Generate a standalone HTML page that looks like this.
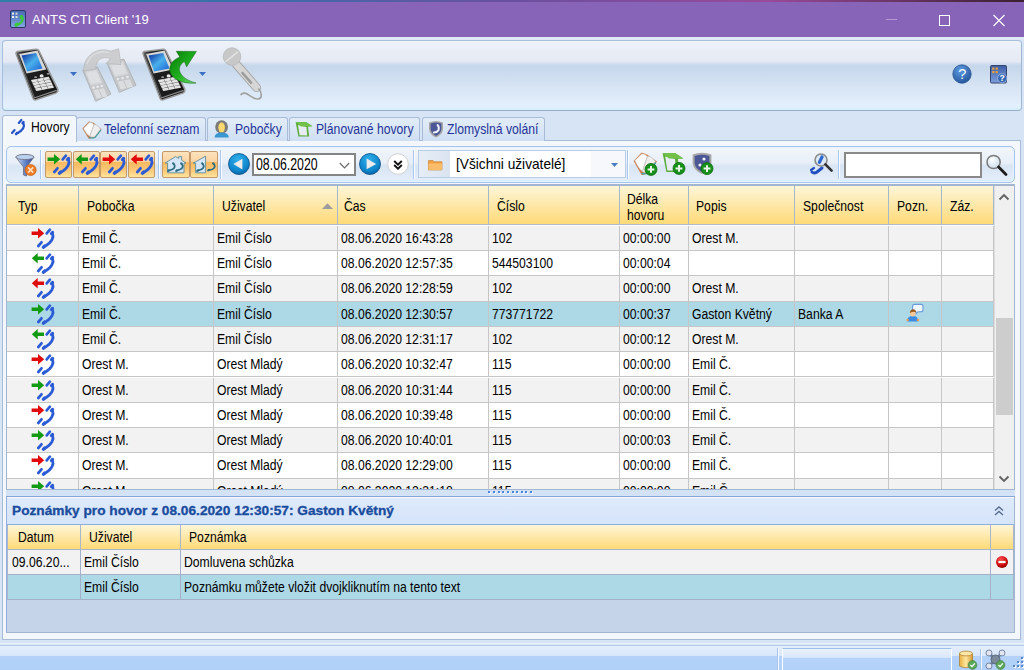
<!DOCTYPE html><html><head><meta charset="utf-8"><style>*{margin:0;padding:0;box-sizing:border-box}
html,body{width:1024px;height:670px;overflow:hidden;background:#d6e4f6;font-family:"Liberation Sans",sans-serif;position:relative}
.a{position:absolute}
svg{overflow:visible}
.t{display:inline-block;font-size:14px;transform:scaleX(.87);transform-origin:0 50%;white-space:nowrap}
#topstrip{left:0;top:0;width:1024px;height:2px;background:linear-gradient(90deg,#2f7fa8 0%,#3d6ea8 25%,#6a4fa0 50%,#9a4a9a 75%,#3a2030 100%)}
#title{left:0;top:2px;width:1024px;height:35px;background:#8764b8}
#ttext{left:32px;top:12px;color:#fff;font-size:13px;line-height:16px;white-space:nowrap}
#tbline{left:0;top:37px;width:1024px;height:3px;background:#dfe9f6}
#toolbar{left:2px;top:40px;width:1020px;height:71px;border:1px solid #a7bfdc;border-bottom-color:#98aec6;border-right-color:#a0b6d0;border-radius:4px;
 background:linear-gradient(180deg,#eef2f9 0%,#e4e9f3 30%,#cddcee 33.5%,#c6d7eb 37%,#d6e4f4 65%,#e3effc 94%,#d6eefa 100%)}
#tabpanel{left:2px;top:140px;width:1019px;height:500px;border:1px solid #a9bcd6;background:#f3f7fc}
.tab{top:117px;height:24px;border:1px solid #a9bcd6;border-bottom:none;border-radius:3px 3px 0 0;
 background:linear-gradient(180deg,#e3edf9,#cfdff3);color:#1f3496;font-size:12px;line-height:22px;white-space:nowrap}
.tab.act{top:115px;height:27px;background:#f3f7fc;color:#000;z-index:2}
#filterbar{left:6px;top:146px;width:1009px;height:37px;border:1px solid #a6c4ec;border-radius:5px;box-shadow:inset 0 0 0 1px #e6f2fc,inset 0 -2px 0 #d2eefa;
 background:linear-gradient(180deg,#f2f6fb 0%,#e8eff8 45%,#d8e5f4 55%,#e6eefa 100%)}
#grid{left:6px;top:184px;width:1009px;height:306px;border:1px solid #a2b6cf;border-top-width:2px;background:#fff;overflow:hidden}
.hdr{top:0;height:39px;border-bottom:1px solid #b0bccc;background:linear-gradient(180deg,#fff6d8 0%,#fee8a8 50%,#feda78 100%)}
.hc{top:0;height:39px;border-right:1px solid #a7b8cd;color:#000;white-space:nowrap;line-height:39px}
.row{left:0;width:987px;height:25.3px}
.c{position:absolute;top:0;height:100%;border-right:1px solid #c6c6c6;border-bottom:1px solid #c6c6c6;color:#000;white-space:nowrap;line-height:24px;padding-left:3px;overflow:hidden}
#vscroll{left:987px;top:0;width:21px;height:303px;background:#f0f0f0;border-left:1px solid #dcdcdc}
#splitter{left:6px;top:490px;width:1009px;height:6px;background:#d3e2f4}
#notes{left:6px;top:496px;width:1009px;height:137px;border:1px solid #a2b6cf;border-top-color:#86a6d8;border-left-color:#94b0da;background:#c5d4e8}
#nhead{left:0;top:0;width:1007px;height:28px;border-bottom:1px solid #8fb0dc;box-shadow:inset 0 1px 0 #f6faff;background:linear-gradient(180deg,#dfeafc,#d5e4fa);-webkit-text-stroke:.35px #1c4fa0;
 color:#1a4c9c;font-weight:bold;font-size:13.7px;line-height:28px;padding-left:5px;white-space:nowrap}
#status{left:0;top:645px;width:1024px;height:25px;border-top:1px solid #b8cde8;background:linear-gradient(180deg,#e4eefc 0%,#d8e7fb 40%,#b4d2f9 43%,#b0d0f8 100%)}
#stline{left:0;top:643px;width:1024px;height:1px;background:#eef4fc}
.sep{width:2px;background:linear-gradient(90deg,#a9c8ef 50%,#fafcff 50%)}
.obtn{border:1px solid #c49a68;border-radius:2px;background:linear-gradient(180deg,#fde3bc 0%,#fbd3a2 38%,#f9b95e 40%,#fac576 70%,#fde49c 100%)}
.nhc{height:24px;border-right:1px solid #a8b6cc;color:#000;white-space:nowrap;line-height:23px}
.nc{height:25px;border-right:1px solid #a3b2ca;border-bottom:1px solid #a3b2ca;color:#000;white-space:nowrap;line-height:24px;padding-left:3px;overflow:hidden}
.sep2{width:2px;background:linear-gradient(90deg,#a8c4e8 50%,#f4f8fe 50%)}
</style></head><body>
<div id="topstrip" class="a"></div>
<div id="title" class="a"></div>
<div id="ttext" class="a">ANTS CTI Client '19</div>
<div id="tbline" class="a"></div>
<div id="toolbar" class="a"></div>
<div id="tabpanel" class="a"></div>
<div class="a tab act" style="left:2px;width:75px;padding-left:28px"><span class="t">Hovory</span></div>
<div class="a tab" style="left:76px;width:130px;padding-left:26.5px"><span class="t">Telefonní seznam</span></div>
<div class="a tab" style="left:207px;width:81px;padding-left:26.5px"><span class="t">Pobočky</span></div>
<div class="a tab" style="left:289px;width:131px;padding-left:25.5px"><span class="t">Plánované hovory</span></div>
<div class="a tab" style="left:422px;width:123px;padding-left:24px"><span class="t">Zlomyslná volání</span></div>
<div id="filterbar" class="a"></div>

<svg class="a" style="left:10px;top:10px" width="16" height="18" viewBox="0 0 16 18">
<defs><linearGradient id="ai" x1="0" y1="0" x2="0" y2="1"><stop offset="0" stop-color="#4568b0"/><stop offset="1" stop-color="#86a6e6"/></linearGradient></defs>
<rect x=".5" y=".5" width="15" height="17" rx="1.5" fill="url(#ai)" stroke="#2b3866"/>
<rect x="2" y="2.6" width="2" height="2" fill="#eee"/><rect x="5.5" y="2.6" width="2" height="2" fill="#ddd"/>
<rect x="2" y="6" width="2" height="2" fill="#eee"/><rect x="5.5" y="6" width="2" height="2" fill="#ddd"/>
<path d="M11.4 6.6 C13.6 9.4 12 13.6 7 15" stroke="#3cc83c" stroke-width="2.4" fill="none" stroke-linecap="round"/><ellipse cx="11.6" cy="7.4" rx="1.9" ry="2.3" fill="#3cc83c" transform="rotate(-30 11.6 7.4)"/><ellipse cx="6.6" cy="14.6" rx="2.4" ry="1.8" fill="#3cc83c" transform="rotate(-30 6.6 14.6)"/>
</svg>
<div class="a" style="left:886px;top:19px;width:11px;height:1px;background:#b29ad6"></div>
<div class="a" style="left:939px;top:15px;width:11px;height:11px;border:1px solid #fff"></div>
<svg class="a" style="left:993px;top:15px" width="12" height="11" viewBox="0 0 12 11"><path d="M0.5 0 L11.5 11 M11.5 0 L0.5 11" stroke="#fff" stroke-width="1.1"/></svg>
<svg class="a" style="left:15px;top:48px" width="44" height="53" viewBox="0 0 44 53">
<defs><linearGradient id="sg15_48" x1="0" y1="0" x2="1" y2="1"><stop offset="0" stop-color="#0a2a9a"/><stop offset=".5" stop-color="#4ab0ec"/><stop offset="1" stop-color="#1a5ed0"/></linearGradient>
<linearGradient id="bg15_48" x1="0" y1="0" x2="1" y2="0"><stop offset="0" stop-color="#707070"/><stop offset=".15" stop-color="#202020"/><stop offset="1" stop-color="#161616"/></linearGradient></defs>
<path d="M1.2 6.2 Q0.2 4.2 2.6 3.6 L21 1.2 Q23 1 23.8 2.6 L42.6 40.8 Q43.6 44 41 45 L21 51.8 Q19 52.4 18.2 50.6 Z" fill="url(#bg15_48)" stroke="#9a9a9a" stroke-width="1.5"/><path d="M2.4 6.4 L19.6 50" stroke="#5a5a5a" stroke-width="1.2"/>
<path d="M19 50 L41.6 42.4" stroke="#8a8a8a" stroke-width="1.2"/>
<path d="M4.1 5.9 L22.5 2.6 L31.3 21.4 L11.6 25.6 Z" fill="#d8d8d8"/>
<path d="M6.6 7.6 L21.2 5.1 L27.5 20.6 L12 23.5 Z" fill="url(#sg15_48)"/>
<ellipse cx="26.6" cy="27.9" rx="2" ry="1.7" fill="#e8e8e8"/>
<ellipse cx="20.6" cy="29.2" rx="1.5" ry=".9" fill="#9a9a9a"/><ellipse cx="33.2" cy="25.8" rx="1.5" ry=".9" fill="#9a9a9a"/>
<path d="M15.8 31.9 L33.8 28.5 L39.2 39 L21.2 43.2 Z" fill="#4a4a4a"/>
<polygon points="16.0,32.0 21.7,30.9 22.9,33.5 17.3,34.5" fill="#e4e4e4"/><polygon points="22.0,30.9 27.7,29.8 28.9,32.4 23.3,33.4" fill="#e4e4e4"/><polygon points="28.0,29.7 33.7,28.7 34.9,31.2 29.3,32.3" fill="#e4e4e4"/><polygon points="17.4,34.8 23.0,33.8 24.3,36.3 18.6,37.4" fill="#e4e4e4"/><polygon points="23.4,33.7 29.0,32.6 30.3,35.2 24.6,36.2" fill="#e4e4e4"/><polygon points="29.4,32.6 35.0,31.5 36.3,34.0 30.6,35.1" fill="#e4e4e4"/><polygon points="18.7,37.7 24.4,36.6 25.6,39.1 20.0,40.2" fill="#e4e4e4"/><polygon points="24.7,36.5 30.4,35.5 31.6,38.0 26.0,39.1" fill="#e4e4e4"/><polygon points="30.7,35.4 36.4,34.3 37.6,36.9 32.0,37.9" fill="#e4e4e4"/><polygon points="20.1,40.5 25.7,39.4 27.0,42.0 21.3,43.0" fill="#e4e4e4"/><polygon points="26.1,39.3 31.7,38.3 33.0,40.8 27.3,41.9" fill="#e4e4e4"/><polygon points="32.1,38.2 37.7,37.2 39.0,39.7 33.3,40.8" fill="#e4e4e4"/>
</svg>
<svg class="a" style="left:70px;top:72px" width="7" height="4" viewBox="0 0 7 4"><path d="M0 0 H7 L3.5 4Z" fill="#3a6fc4"/></svg>
<svg class="a" style="left:80px;top:44px;opacity:.85" width="60" height="60" viewBox="0 0 60 60">
<polygon points="2.7,26.0 17.5,23.3 30.9,50.1 15.7,57.3" fill="#c2c2c2" stroke="#acacac" stroke-width="1"/><polygon points="5.0,27.6 16.8,25.4 22.5,39.2 10.7,41.4" fill="#d6d6d6" /><polygon points="6.4,28.7 16.4,26.9 20.9,37.5 10.8,39.3" fill="#e0e0e0" /><circle cx="13.5" cy="43.6" r="1.3" fill="#ececec"/><circle cx="17.6" cy="42.8" r="1.3" fill="#ececec"/><circle cx="21.8" cy="42.0" r="1.3" fill="#ececec"/><polygon points="13.4,46.3 24.0,44.3 27.4,52.5 16.7,54.4" fill="#dcdcdc" /><path d="M18.7 45.3 L22.1 53.4" stroke="#b8b8b8" stroke-width=".8"/>
<polygon points="26.9,18.8 43.9,15.2 56.0,41.2 39.4,48.3" fill="#c2c2c2" stroke="#acacac" stroke-width="1"/><polygon points="29.3,20.2 43.0,17.3 48.5,30.3 34.8,33.2" fill="#d6d6d6" /><polygon points="30.9,21.2 42.4,18.7 46.7,28.8 35.1,31.2" fill="#e0e0e0" /><circle cx="37.9" cy="35.1" r="1.3" fill="#ececec"/><circle cx="42.6" cy="34.1" r="1.3" fill="#ececec"/><circle cx="47.4" cy="33.1" r="1.3" fill="#ececec"/><polygon points="37.5,37.8 49.8,35.2 53.0,42.8 40.8,45.4" fill="#dcdcdc" /><path d="M43.6 36.5 L46.9 44.1" stroke="#b8b8b8" stroke-width=".8"/>
<path d="M3.5 27 C4 11 17 2.5 31 7.2 L38.6 4.8 L41 20.6 L26 19.6 L30.6 14.6 C22 11.6 16 15.6 15.6 25 Z" fill="#c9c9c9" stroke="#b4b4b4" stroke-width=".8"/>
<path d="M7 20 C10 10 20 6 29 8.6" stroke="#dcdcdc" stroke-width="1.4" fill="none"/>
</svg>
<svg class="a" style="left:141.5px;top:48px" width="44" height="53" viewBox="0 0 44 53">
<defs><linearGradient id="sg141_48" x1="0" y1="0" x2="1" y2="1"><stop offset="0" stop-color="#0a2a9a"/><stop offset=".5" stop-color="#4ab0ec"/><stop offset="1" stop-color="#1a5ed0"/></linearGradient>
<linearGradient id="bg141_48" x1="0" y1="0" x2="1" y2="0"><stop offset="0" stop-color="#707070"/><stop offset=".15" stop-color="#202020"/><stop offset="1" stop-color="#161616"/></linearGradient></defs>
<path d="M1.2 6.2 Q0.2 4.2 2.6 3.6 L21 1.2 Q23 1 23.8 2.6 L42.6 40.8 Q43.6 44 41 45 L21 51.8 Q19 52.4 18.2 50.6 Z" fill="url(#bg141_48)" stroke="#9a9a9a" stroke-width="1.5"/><path d="M2.4 6.4 L19.6 50" stroke="#5a5a5a" stroke-width="1.2"/>
<path d="M19 50 L41.6 42.4" stroke="#8a8a8a" stroke-width="1.2"/>
<path d="M4.1 5.9 L22.5 2.6 L31.3 21.4 L11.6 25.6 Z" fill="#d8d8d8"/>
<path d="M6.6 7.6 L21.2 5.1 L27.5 20.6 L12 23.5 Z" fill="url(#sg141_48)"/>
<ellipse cx="26.6" cy="27.9" rx="2" ry="1.7" fill="#e8e8e8"/>
<ellipse cx="20.6" cy="29.2" rx="1.5" ry=".9" fill="#9a9a9a"/><ellipse cx="33.2" cy="25.8" rx="1.5" ry=".9" fill="#9a9a9a"/>
<path d="M15.8 31.9 L33.8 28.5 L39.2 39 L21.2 43.2 Z" fill="#4a4a4a"/>
<polygon points="16.0,32.0 21.7,30.9 22.9,33.5 17.3,34.5" fill="#e4e4e4"/><polygon points="22.0,30.9 27.7,29.8 28.9,32.4 23.3,33.4" fill="#e4e4e4"/><polygon points="28.0,29.7 33.7,28.7 34.9,31.2 29.3,32.3" fill="#e4e4e4"/><polygon points="17.4,34.8 23.0,33.8 24.3,36.3 18.6,37.4" fill="#e4e4e4"/><polygon points="23.4,33.7 29.0,32.6 30.3,35.2 24.6,36.2" fill="#e4e4e4"/><polygon points="29.4,32.6 35.0,31.5 36.3,34.0 30.6,35.1" fill="#e4e4e4"/><polygon points="18.7,37.7 24.4,36.6 25.6,39.1 20.0,40.2" fill="#e4e4e4"/><polygon points="24.7,36.5 30.4,35.5 31.6,38.0 26.0,39.1" fill="#e4e4e4"/><polygon points="30.7,35.4 36.4,34.3 37.6,36.9 32.0,37.9" fill="#e4e4e4"/><polygon points="20.1,40.5 25.7,39.4 27.0,42.0 21.3,43.0" fill="#e4e4e4"/><polygon points="26.1,39.3 31.7,38.3 33.0,40.8 27.3,41.9" fill="#e4e4e4"/><polygon points="32.1,38.2 37.7,37.2 39.0,39.7 33.3,40.8" fill="#e4e4e4"/>
</svg>
<svg class="a" style="left:168.5px;top:49.5px" width="30" height="36" viewBox="0 0 30 36">
<defs><linearGradient id="ga" x1="0" y1="0" x2="1" y2="1"><stop offset="0" stop-color="#067a06"/><stop offset=".55" stop-color="#1fb01f"/><stop offset="1" stop-color="#6ee06e"/></linearGradient></defs>
<path d="M27 33 C14 34.5 0 28.5 0.8 18.5 C1.4 12.5 5.6 9.2 10.8 7 L7.3 1.3 L27.4 1.4 L17.6 16.8 L15.4 11.6 C10.8 14.2 9.4 18.4 11 22.2 C13 27 19 31 27 33 Z" fill="url(#ga)" stroke="#0a5f0a" stroke-width=".5"/>
</svg>
<svg class="a" style="left:199px;top:72px" width="7" height="4" viewBox="0 0 7 4"><path d="M0 0 H7 L3.5 4Z" fill="#3a6fc4"/></svg>
<svg class="a" style="left:220px;top:47px" width="46" height="54" viewBox="0 0 46 54">
<path d="M16 17 L36.6 40.6" stroke="#a9a9a9" stroke-width="9" stroke-linecap="round"/>
<path d="M16 17 L36.6 40.6" stroke="#d6d6d6" stroke-width="7" stroke-linecap="round"/>
<path d="M22.5 26 L31 35.6" stroke="#9c9c9c" stroke-width="2.6" stroke-linecap="round"/>
<circle cx="12" cy="9.6" r="8.8" fill="#c8c8c8" stroke="#b8b8b8" stroke-width=".8"/>
<path d="M5.4 15 L18 4.6" stroke="#e2e2e2" stroke-width="1.6"/>
<path d="M38.4 41.5 C42 45 42.6 51.6 38 52 C32.5 52.4 29 46.6 24.6 46.2 C22.6 46 21.4 47 20.6 48" stroke="#a2a2a2" stroke-width="1.7" fill="none"/>
</svg>
<svg class="a" style="left:952px;top:64px" width="20" height="20" viewBox="0 0 20 20">
<defs><radialGradient id="hi" cx=".4" cy=".3" r=".8"><stop offset="0" stop-color="#5e9be0"/><stop offset="1" stop-color="#1f4f96"/></radialGradient></defs>
<circle cx="10" cy="10" r="9.2" fill="url(#hi)" stroke="#2a5490" stroke-width=".8"/>
<text x="10.2" y="15.2" text-anchor="middle" font-family="Liberation Sans" font-size="14.5" fill="#f4f8ff">?</text>
</svg>
<svg class="a" style="left:11px;top:119px;z-index:5" width="16" height="18" viewBox="0 0 16 18"><g transform="translate(-5.6,-1.2) scale(0.8)"><path d="M16.7 6.4 L19.9 2.7 M8.3 19.0 L11.5 15.3" stroke="#2553c8" stroke-width="2.7" stroke-linecap="round" fill="none"/><path d="M22.6 6.6 C24.0 10 22.4 15.2 14.6 19.6" stroke="#2553c8" stroke-width="2.7" fill="none"/><rect x="-2.4" y="-1.55" width="4.8" height="3.1" rx="1.4" transform="translate(22.0 6.0) rotate(-51)" fill="#2553c8"/><rect x="-2.5" y="-1.6" width="5" height="3.2" rx="1.4" transform="translate(14.0 19.6) rotate(-47)" fill="#2553c8"/></g></svg>
<svg class="a" style="left:81.5px;top:120.5px" width="20" height="18" viewBox="0 0 20 18">
<path d="M0.4 7.6 L7 0.4 L11.6 1.8 L19.6 8.4 L13.4 16.8 L6.8 17.8 Z" fill="#c47a48"/>
<path d="M1.5 7.4 L7.2 1.4 Q10 1 12 3.6 L7.8 15.2 Q4.6 13.6 1.5 7.4Z" fill="#fbfbfb" stroke="#b4b4b4" stroke-width=".5"/>
<path d="M12 3.6 Q15 2.8 18.6 8.2 L12.8 15.8 Q10 17 7.8 15.2 Z" fill="#eeeeee" stroke="#b4b4b4" stroke-width=".5"/>
<path d="M7 16.6 Q10 17.6 13.2 16.4 L19 9" stroke="#3aa6b0" stroke-width="1.1" fill="none"/>
</svg>
<svg class="a" style="left:214px;top:120px" width="16" height="18" viewBox="0 0 16 18">
<ellipse cx="7.6" cy="7" rx="6.4" ry="6.8" fill="#7a7a7a"/>
<ellipse cx="7.6" cy="7.6" rx="3.3" ry="5" fill="#fcd870"/>
<path d="M0.6 17.4 Q0.6 12.6 7.6 12.4 Q14.8 12.6 14.8 17.4 Z" fill="#3a96d0"/>
</svg>
<svg class="a" style="left:295px;top:121px" width="18" height="17" viewBox="0 0 18 17">
<path d="M0.6 1 L11 1 L17.4 5.2 L13 5.6 L14.2 15.6 L3.4 15.6 Z" fill="#5cac3c"/>
<path d="M3 4 L11.4 6 L12.2 14.4 L4.6 14.2 Z" fill="#e6ecf2"/>
<path d="M0.6 1 L11 1 L17.4 5.2 L6 5.4 Z" fill="#72c24a"/>
</svg>
<svg class="a" style="left:428px;top:120px" width="16" height="18" viewBox="0 0 16 18">
<path d="M1 2.4 Q8 -0.6 15 2.4 L15 9 Q14.6 14.6 8 17.6 Q1.4 14.6 1 9 Z" fill="#a8a8a8"/>
<path d="M2.6 3.6 Q8 1.6 13.4 3.6 L13.4 9 Q13 13.4 8 16 Q3 13.4 2.6 9 Z" fill="#4c5896"/>
<path d="M9.6 5 Q11.6 7.2 10.4 10.4 Q8.8 12.6 5.8 12.6" stroke="#eef" stroke-width="2" fill="none" stroke-linecap="round"/>
</svg>
<svg class="a" style="left:14.5px;top:152.5px" width="24" height="24" viewBox="0 0 24 24">
<defs><linearGradient id="fn" x1="0" y1="0" x2="1" y2="0"><stop offset="0" stop-color="#e8f0fa"/><stop offset=".45" stop-color="#6a8ed0"/><stop offset="1" stop-color="#2a3f90"/></linearGradient></defs>
<path d="M0.8 4 Q9.5 -1 19 4 L11.5 14 L11.5 23 L8.5 22 L8.5 14 Z" fill="url(#fn)" stroke="#6a6a78" stroke-width=".8"/>
<ellipse cx="9.9" cy="4" rx="9.1" ry="2.6" fill="#b8d0ee" stroke="#707080" stroke-width=".8"/>
<circle cx="15.6" cy="17" r="5.6" fill="#ec7a22" stroke="#c85a10" stroke-width=".6"/>
<path d="M13 14.4 L18.2 19.6 M18.2 14.4 L13 19.6" stroke="#fbe0c8" stroke-width="1.6"/>
</svg>
<div class="a sep" style="left:40px;top:150px;height:29px"></div>
<div class="a obtn" style="left:45px;top:151px;width:27px;height:27px"></div>
<svg class="a" style="left:46px;top:153px" width="26" height="24" viewBox="0 0 26 24"><path d="M1.6 4.6 H8 V1 L14.2 6.2 L8 11.4 V8.1 H1.6Z" fill="#139a13"/><g transform="translate(0,0) scale(1.0)"><path d="M16.7 6.4 L19.9 2.7 M8.3 19.0 L11.5 15.3" stroke="#2b5cd6" stroke-width="2.7" stroke-linecap="round" fill="none"/><path d="M22.6 6.6 C24.0 10 22.4 15.2 14.6 19.6" stroke="#2b5cd6" stroke-width="2.7" fill="none"/><rect x="-2.4" y="-1.55" width="4.8" height="3.1" rx="1.4" transform="translate(22.0 6.0) rotate(-51)" fill="#2b5cd6"/><rect x="-2.5" y="-1.6" width="5" height="3.2" rx="1.4" transform="translate(14.0 19.6) rotate(-47)" fill="#2b5cd6"/></g></svg>
<div class="a obtn" style="left:73px;top:151px;width:27px;height:27px"></div>
<svg class="a" style="left:74px;top:153px" width="26" height="24" viewBox="0 0 26 24"><path d="M14 4.6 H7.7 V1 L1.8 6.2 L7.7 11.4 V8.1 H14Z" fill="#139a13"/><g transform="translate(0,0) scale(1.0)"><path d="M16.7 6.4 L19.9 2.7 M8.3 19.0 L11.5 15.3" stroke="#2b5cd6" stroke-width="2.7" stroke-linecap="round" fill="none"/><path d="M22.6 6.6 C24.0 10 22.4 15.2 14.6 19.6" stroke="#2b5cd6" stroke-width="2.7" fill="none"/><rect x="-2.4" y="-1.55" width="4.8" height="3.1" rx="1.4" transform="translate(22.0 6.0) rotate(-51)" fill="#2b5cd6"/><rect x="-2.5" y="-1.6" width="5" height="3.2" rx="1.4" transform="translate(14.0 19.6) rotate(-47)" fill="#2b5cd6"/></g></svg>
<div class="a obtn" style="left:100px;top:151px;width:27px;height:27px"></div>
<svg class="a" style="left:101px;top:153px" width="26" height="24" viewBox="0 0 26 24"><path d="M1.6 4.6 H8 V1 L14.2 6.2 L8 11.4 V8.1 H1.6Z" fill="#e00a0a"/><g transform="translate(0,0) scale(1.0)"><path d="M16.7 6.4 L19.9 2.7 M8.3 19.0 L11.5 15.3" stroke="#2b5cd6" stroke-width="2.7" stroke-linecap="round" fill="none"/><path d="M22.6 6.6 C24.0 10 22.4 15.2 14.6 19.6" stroke="#2b5cd6" stroke-width="2.7" fill="none"/><rect x="-2.4" y="-1.55" width="4.8" height="3.1" rx="1.4" transform="translate(22.0 6.0) rotate(-51)" fill="#2b5cd6"/><rect x="-2.5" y="-1.6" width="5" height="3.2" rx="1.4" transform="translate(14.0 19.6) rotate(-47)" fill="#2b5cd6"/></g></svg>
<div class="a obtn" style="left:128px;top:151px;width:27px;height:27px"></div>
<svg class="a" style="left:129px;top:153px" width="26" height="24" viewBox="0 0 26 24"><path d="M14 4.6 H7.7 V1 L1.8 6.2 L7.7 11.4 V8.1 H14Z" fill="#e00a0a"/><g transform="translate(0,0) scale(1.0)"><path d="M16.7 6.4 L19.9 2.7 M8.3 19.0 L11.5 15.3" stroke="#2b5cd6" stroke-width="2.7" stroke-linecap="round" fill="none"/><path d="M22.6 6.6 C24.0 10 22.4 15.2 14.6 19.6" stroke="#2b5cd6" stroke-width="2.7" fill="none"/><rect x="-2.4" y="-1.55" width="4.8" height="3.1" rx="1.4" transform="translate(22.0 6.0) rotate(-51)" fill="#2b5cd6"/><rect x="-2.5" y="-1.6" width="5" height="3.2" rx="1.4" transform="translate(14.0 19.6) rotate(-47)" fill="#2b5cd6"/></g></svg>
<div class="a sep" style="left:158px;top:150px;height:29px"></div>
<div class="a obtn" style="left:162px;top:151px;width:28px;height:27px"></div>
<div class="a obtn" style="left:190px;top:151px;width:28px;height:27px"></div>
<svg class="a" style="left:164px;top:155px" width="24" height="20" viewBox="0 0 24 20">
<path d="M1.2 8 L11.6 1.6 L14.8 3.4 L14.8 1.6 L17.6 1.6 L17.6 5.2 L22 8 L20 8 L20 17.8 L3.6 17.8 L3.6 8 Z" fill="#d4e6f8" stroke="#5e8c98" stroke-width=".9"/>
<path d="M9.4 8.6 C12.0 11.2 11.0 14.6 4.6 15.6" stroke="#2e6e80" stroke-width="1.7" fill="none" stroke-linecap="round"/><ellipse cx="9.4" cy="8.6" rx="1.5" ry="1.1" transform="rotate(50 9.4 8.6)" fill="#2e6e80"/><ellipse cx="4.6" cy="15.6" rx="1.6" ry="1.1" transform="rotate(-35 4.6 15.6)" fill="#2e6e80"/><path d="M17.4 8.6 C20.0 11.2 19.0 14.6 12.6 15.6" stroke="#2e6e80" stroke-width="1.7" fill="none" stroke-linecap="round"/><ellipse cx="17.4" cy="8.6" rx="1.5" ry="1.1" transform="rotate(50 17.4 8.6)" fill="#2e6e80"/><ellipse cx="12.6" cy="15.6" rx="1.6" ry="1.1" transform="rotate(-35 12.6 15.6)" fill="#2e6e80"/>
</svg>
<svg class="a" style="left:192px;top:155px" width="24" height="20" viewBox="0 0 24 20">
<path d="M1.2 8.2 L13.6 1.2 L13.6 17.8 L3.6 17.8 L3.6 8.2 Z" fill="#d4e6f8" stroke="#5e8c98" stroke-width=".9"/>
<path d="M10.4 8.6 C13.0 11.2 12.0 14.6 5.6 15.6" stroke="#2e6e80" stroke-width="1.7" fill="none" stroke-linecap="round"/><ellipse cx="10.4" cy="8.6" rx="1.5" ry="1.1" transform="rotate(50 10.4 8.6)" fill="#2e6e80"/><ellipse cx="5.6" cy="15.6" rx="1.6" ry="1.1" transform="rotate(-35 5.6 15.6)" fill="#2e6e80"/><path d="M21.4 8.6 C24.0 11.2 23.0 14.6 16.6 15.2" stroke="#2e6e80" stroke-width="1.7" fill="none" stroke-linecap="round"/><ellipse cx="21.4" cy="8.6" rx="1.5" ry="1.1" transform="rotate(50 21.4 8.6)" fill="#2e6e80"/><ellipse cx="16.6" cy="15.2" rx="1.6" ry="1.1" transform="rotate(-35 16.6 15.2)" fill="#2e6e80"/>
</svg>
<div class="a sep" style="left:220px;top:150px;height:29px"></div>
<svg class="a" style="left:227.5px;top:153px" width="22" height="22" viewBox="-11 -11 22 22">
<defs><radialGradient id="ncl" cx=".45" cy=".3" r=".75"><stop offset="0" stop-color="#32b0ea"/><stop offset=".7" stop-color="#0d85cc"/><stop offset="1" stop-color="#0a5e9e"/></radialGradient></defs>
<circle r="10.5" fill="url(#ncl)" stroke="#0b4f86" stroke-width=".8"/>
<path d="M-5.6 0 L3.4 -5.2 L3.4 5.4 Z" fill="#ececec"/>
</svg>
<div class="a" style="left:252px;top:153px;width:104px;height:23px;border:2px solid #858585;background:#fff"></div>
<div class="a" style="left:256px;top:155px;color:#000;line-height:19px"><span class="t" style="font-size:15.6px;transform:scaleX(.79)">08.06.2020</span></div>
<svg class="a" style="left:339px;top:162px" width="11" height="7" viewBox="0 0 11 7"><path d="M0.8 1 L5.5 5.8 L10.2 1" stroke="#6a6a6a" stroke-width="1.2" fill="none"/></svg>
<svg class="a" style="left:358.5px;top:153px" width="22" height="22" viewBox="-11 -11 22 22">
<defs><radialGradient id="ncr" cx=".45" cy=".3" r=".75"><stop offset="0" stop-color="#32b0ea"/><stop offset=".7" stop-color="#0d85cc"/><stop offset="1" stop-color="#0a5e9e"/></radialGradient></defs>
<circle r="10.5" fill="url(#ncr)" stroke="#0b4f86" stroke-width=".8"/>
<path d="M6.2 0 L-3.4 -5.6 L-3.4 5.2 Z" fill="#ececec"/>
</svg>
<svg class="a" style="left:387px;top:153px" width="22" height="22" viewBox="-11 -11 22 22">
<circle r="10.3" fill="#fff" stroke="#d2d2d2" stroke-width="1"/>
<path d="M-3.8 -3 L0 0.6 L3.8 -3 M-3.8 1 L0 4.6 L3.8 1" stroke="#111" stroke-width="1.9" fill="none"/>
</svg>
<div class="a sep" style="left:413px;top:150px;height:29px"></div>
<div class="a" style="left:418px;top:150px;width:208px;height:28px;border:1px solid #b8cde6;background:#fff"></div>
<div class="a" style="left:419px;top:151px;width:31px;height:26px;background:linear-gradient(90deg,#e6edf6,#dae4f0)"></div>
<div class="a" style="left:591px;top:151px;width:34px;height:26px;background:#f6f8fb"></div>
<svg class="a" style="left:428px;top:159px" width="15" height="12" viewBox="0 0 15 12">
<path d="M0.5 1.5 L5 1.5 L6.2 2.8 L14 2.8 L14 11 L0.5 11 Z" fill="#f2a040" stroke="#c07828" stroke-width=".6"/>
<path d="M0.6 4.4 L14 4.4 L14 11 L0.6 11 Z" fill="#fbbd6a"/>
</svg>
<div class="a" style="left:456px;top:151px;color:#000;line-height:26px"><span class="t" style="font-size:14.4px;transform:scaleX(.95)">[Všichni uživatelé]</span></div>
<svg class="a" style="left:611px;top:163px" width="7" height="4" viewBox="0 0 7 4"><path d="M0 0 H7 L3.5 4Z" fill="#4a7cc0"/></svg>
<div class="a sep" style="left:627px;top:150px;height:29px"></div>
<svg class="a" style="left:633px;top:152px" width="24" height="23" viewBox="0 0 24 23">
<path d="M0.6 9 L8.6 0.6 L14 2.6 L24 9.4 L16 21.4 L8.6 23 Z" fill="#d67a44"/>
<path d="M1.8 8.6 L8.8 1.8 Q12 1.4 14.4 4.4 L9.4 19.6 Q6 17.4 1.8 8.6Z" fill="#fbfbfb" stroke="#b4b4b4" stroke-width=".5"/>
<path d="M14.4 4.4 Q18 3.4 22.4 9.4 L15.4 20.2 Q12 21.6 9.4 19.6 Z" fill="#eeeeee" stroke="#b4b4b4" stroke-width=".5"/>
<path d="M8.6 21.4 Q12 22.6 15.8 21 L22.8 10.4" stroke="#3aa6b0" stroke-width="1.2" fill="none"/>
<g><circle cx="18" cy="17.4" r="6" fill="#17901a" stroke="#0a6a0c" stroke-width=".8"/><path d="M14.6 17.4 H21.4 M18 13.999999999999998 V20.799999999999997" stroke="#e8f6e8" stroke-width="2"/></g>
</svg>
<svg class="a" style="left:662px;top:152px" width="24" height="23" viewBox="0 0 24 23">
<path d="M0.6 1 L13 1 L21.4 6.4 L16 6.8 L17 20 L4.4 20 Z" fill="#5cac3c"/>
<path d="M3.2 4.6 L13 7 L14 18.4 L5.4 18.4 Z" fill="#e6ecf2"/>
<path d="M0.6 1 L13 1 L21.4 6.4 L7 6.6 Z" fill="#72c24a"/>
<g><circle cx="17" cy="16.4" r="6" fill="#17901a" stroke="#0a6a0c" stroke-width=".8"/><path d="M13.6 16.4 H20.4 M17 12.999999999999998 V19.799999999999997" stroke="#e8f6e8" stroke-width="2"/></g>
</svg>
<svg class="a" style="left:692px;top:152px" width="24" height="23" viewBox="0 0 24 23">
<path d="M0.6 2.6 Q10 -1 19.4 2.6 L19.4 11 Q19 18 10 22 Q1 18 0.6 11 Z" fill="#a8a8a8"/>
<path d="M2.6 4 Q10 1.6 17.4 4 L17.4 11 Q17 16.6 10 20 Q3 16.6 2.6 11 Z" fill="#4c5896"/>
<circle cx="12" cy="7" r="1.6" fill="#eef"/><circle cx="8" cy="13" r="1.6" fill="#eef"/>
<g><circle cx="15" cy="16.6" r="6" fill="#17901a" stroke="#0a6a0c" stroke-width=".8"/><path d="M11.6 16.6 H18.4 M15 13.200000000000001 V20.0" stroke="#e8f6e8" stroke-width="2"/></g>
</svg>
<svg class="a" style="left:810px;top:153px" width="24" height="22" viewBox="0 0 24 22">
<path d="M2 19 Q4 21 7 19 L12 15" stroke="#2050c0" stroke-width="3" fill="none" stroke-linecap="round"/>
<path d="M1 17 L4 15" stroke="#2050c0" stroke-width="2.2" stroke-linecap="round"/>
<circle cx="11" cy="7" r="6" fill="#dce8f4" stroke="#8a8a8a" stroke-width="1.6"/>
<path d="M9.4 9.4 L12 4" stroke="#2a66d0" stroke-width="3.2" stroke-linecap="round"/>
<path d="M15.4 11.4 L21.6 17.6" stroke="#303030" stroke-width="2.6" stroke-linecap="round"/>
</svg>
<div class="a sep" style="left:838px;top:150px;height:29px"></div>
<div class="a" style="left:844px;top:152px;width:138px;height:26px;border:2px solid #898989;background:#fff"></div>
<svg class="a" style="left:985px;top:154px" width="24" height="22" viewBox="0 0 24 22">
<defs><radialGradient id="mg" cx=".4" cy=".35" r=".7"><stop offset="0" stop-color="#fff"/><stop offset="1" stop-color="#c8dcea"/></radialGradient></defs>
<circle cx="8.6" cy="8" r="6.6" fill="url(#mg)" stroke="#7a7a7a" stroke-width="1.5"/>
<path d="M13.6 13 L21 20.4" stroke="#1e1e1e" stroke-width="2.8" stroke-linecap="round"/>
</svg>
<svg class="a" style="left:990px;top:65px" width="18" height="19" viewBox="0 0 18 19">
<defs><linearGradient id="ii" x1="0" y1="0" x2="0" y2="1"><stop offset="0" stop-color="#3d5fa8"/><stop offset="1" stop-color="#7d9fdc"/></linearGradient></defs>
<rect x=".5" y=".5" width="16" height="17.5" rx="1.2" fill="url(#ii)" stroke="#34446c"/>
<rect x="2.2" y="2.5" width="2.2" height="2.2" fill="#f0a030"/><rect x="5.6" y="2.5" width="2.2" height="2.2" fill="#f0a030"/>
<rect x="2.2" y="6" width="2.2" height="2.2" fill="#f0a030"/><rect x="5.6" y="6" width="2.2" height="2.2" fill="#f0a030"/>
<circle cx="12.2" cy="13.2" r="4.6" fill="#3568b4" stroke="#9fb8e0" stroke-width=".8"/>
<text x="12.2" y="16.4" text-anchor="middle" font-family="Liberation Sans" font-weight="bold" font-size="8.5" fill="#fff">?</text>
</svg>
<div id="grid" class="a">
<div class="a hdr" style="left:0;width:987px"></div>
<div class="a hc" style="left:0px;width:72px;padding-left:11px"><span class="t">Typ</span></div>
<div class="a hc" style="left:72px;width:135px;padding-left:8px"><span class="t">Pobočka</span></div>
<div class="a hc" style="left:207px;width:124px;padding-left:8px"><span class="t">Uživatel</span></div>
<div class="a hc" style="left:331px;width:151px;padding-left:6px"><span class="t">Čas</span></div>
<div class="a hc" style="left:482px;width:131px;padding-left:8px"><span class="t">Číslo</span></div>
<div class="a hc" style="left:613px;width:69px;line-height:15px;padding-top:5px;padding-left:7px"><span class="t">Délka</span><br><span class="t">hovoru</span></div>
<div class="a hc" style="left:682px;width:106px;padding-left:7px"><span class="t">Popis</span></div>
<div class="a hc" style="left:788px;width:94px;padding-left:8px"><span class="t">Společnost</span></div>
<div class="a hc" style="left:882px;width:53px;padding-left:8px"><span class="t">Pozn.</span></div>
<div class="a hc" style="left:935px;width:52px;padding-left:8px"><span class="t">Záz.</span></div>
<svg class="a" style="left:315px;top:17px" width="11" height="6" viewBox="0 0 11 6"><path d="M0 6 L5.5 0.3 L11 6Z" fill="#9c9c9c"/></svg>
<div class="a row" style="top:39.7px;background:#f2f2f2">
<div class="c" style="left:0px;width:72px"></div>
<div class="c" style="left:72px;width:135px"><span class="t">Emil Č.</span></div>
<div class="c" style="left:207px;width:124px"><span class="t">Emil Číslo</span></div>
<div class="c" style="left:331px;width:151px"><span class="t">08.06.2020 16:43:28</span></div>
<div class="c" style="left:482px;width:131px"><span class="t">102</span></div>
<div class="c" style="left:613px;width:69px"><span class="t">00:00:00</span></div>
<div class="c" style="left:682px;width:106px"><span class="t">Orest M.</span></div>
<div class="c" style="left:788px;width:94px"></div>
<div class="c" style="left:882px;width:53px"></div>
<div class="c" style="left:935px;width:52px"></div>
</div>
<div class="a" style="left:0;top:39.7px;width:71px;height:25px"><svg class="a" style="left:23px;top:1px" width="26" height="24" viewBox="0 0 26 24"><path d="M1.6 4.6 H8 V1 L14.2 6.2 L8 11.4 V8.1 H1.6Z" fill="#e00a0a"/>
<path d="M16.7 6.4 L19.9 2.7 M8.3 19.0 L11.5 15.3" stroke="#2b5cd6" stroke-width="2.7" stroke-linecap="round" fill="none"/><path d="M22.6 6.6 C24.0 10 22.4 15.2 14.6 19.6" stroke="#2b5cd6" stroke-width="2.7" fill="none"/><rect x="-2.4" y="-1.55" width="4.8" height="3.1" rx="1.4" transform="translate(22.0 6.0) rotate(-51)" fill="#2b5cd6"/><rect x="-2.5" y="-1.6" width="5" height="3.2" rx="1.4" transform="translate(14.0 19.6) rotate(-47)" fill="#2b5cd6"/></svg></div>
<div class="a row" style="top:65.0px;background:#ffffff">
<div class="c" style="left:0px;width:72px"></div>
<div class="c" style="left:72px;width:135px"><span class="t">Emil Č.</span></div>
<div class="c" style="left:207px;width:124px"><span class="t">Emil Číslo</span></div>
<div class="c" style="left:331px;width:151px"><span class="t">08.06.2020 12:57:35</span></div>
<div class="c" style="left:482px;width:131px"><span class="t">544503100</span></div>
<div class="c" style="left:613px;width:69px"><span class="t">00:00:04</span></div>
<div class="c" style="left:682px;width:106px"></div>
<div class="c" style="left:788px;width:94px"></div>
<div class="c" style="left:882px;width:53px"></div>
<div class="c" style="left:935px;width:52px"></div>
</div>
<div class="a" style="left:0;top:65.0px;width:71px;height:25px"><svg class="a" style="left:23px;top:1px" width="26" height="24" viewBox="0 0 26 24"><path d="M14 4.6 H7.7 V1 L1.8 6.2 L7.7 11.4 V8.1 H14Z" fill="#139a13"/>
<path d="M16.7 6.4 L19.9 2.7 M8.3 19.0 L11.5 15.3" stroke="#2b5cd6" stroke-width="2.7" stroke-linecap="round" fill="none"/><path d="M22.6 6.6 C24.0 10 22.4 15.2 14.6 19.6" stroke="#2b5cd6" stroke-width="2.7" fill="none"/><rect x="-2.4" y="-1.55" width="4.8" height="3.1" rx="1.4" transform="translate(22.0 6.0) rotate(-51)" fill="#2b5cd6"/><rect x="-2.5" y="-1.6" width="5" height="3.2" rx="1.4" transform="translate(14.0 19.6) rotate(-47)" fill="#2b5cd6"/></svg></div>
<div class="a row" style="top:90.3px;background:#f2f2f2">
<div class="c" style="left:0px;width:72px"></div>
<div class="c" style="left:72px;width:135px"><span class="t">Emil Č.</span></div>
<div class="c" style="left:207px;width:124px"><span class="t">Emil Číslo</span></div>
<div class="c" style="left:331px;width:151px"><span class="t">08.06.2020 12:28:59</span></div>
<div class="c" style="left:482px;width:131px"><span class="t">102</span></div>
<div class="c" style="left:613px;width:69px"><span class="t">00:00:00</span></div>
<div class="c" style="left:682px;width:106px"><span class="t">Orest M.</span></div>
<div class="c" style="left:788px;width:94px"></div>
<div class="c" style="left:882px;width:53px"></div>
<div class="c" style="left:935px;width:52px"></div>
</div>
<div class="a" style="left:0;top:90.3px;width:71px;height:25px"><svg class="a" style="left:23px;top:1px" width="26" height="24" viewBox="0 0 26 24"><path d="M14 4.6 H7.7 V1 L1.8 6.2 L7.7 11.4 V8.1 H14Z" fill="#e00a0a"/>
<path d="M16.7 6.4 L19.9 2.7 M8.3 19.0 L11.5 15.3" stroke="#2b5cd6" stroke-width="2.7" stroke-linecap="round" fill="none"/><path d="M22.6 6.6 C24.0 10 22.4 15.2 14.6 19.6" stroke="#2b5cd6" stroke-width="2.7" fill="none"/><rect x="-2.4" y="-1.55" width="4.8" height="3.1" rx="1.4" transform="translate(22.0 6.0) rotate(-51)" fill="#2b5cd6"/><rect x="-2.5" y="-1.6" width="5" height="3.2" rx="1.4" transform="translate(14.0 19.6) rotate(-47)" fill="#2b5cd6"/></svg></div>
<div class="a row" style="top:115.6px;background:#add8e6">
<div class="c" style="left:0px;width:72px"></div>
<div class="c" style="left:72px;width:135px"><span class="t">Emil Č.</span></div>
<div class="c" style="left:207px;width:124px"><span class="t">Emil Číslo</span></div>
<div class="c" style="left:331px;width:151px"><span class="t">08.06.2020 12:30:57</span></div>
<div class="c" style="left:482px;width:131px"><span class="t">773771722</span></div>
<div class="c" style="left:613px;width:69px"><span class="t">00:00:37</span></div>
<div class="c" style="left:682px;width:106px"><span class="t">Gaston Květný</span></div>
<div class="c" style="left:788px;width:94px"><span class="t">Banka A</span></div>
<div class="c" style="left:882px;width:53px"></div>
<div class="c" style="left:935px;width:52px"></div>
</div>
<div class="a" style="left:0;top:115.6px;width:71px;height:25px"><svg class="a" style="left:23px;top:1px" width="26" height="24" viewBox="0 0 26 24"><path d="M1.6 4.6 H8 V1 L14.2 6.2 L8 11.4 V8.1 H1.6Z" fill="#139a13"/>
<path d="M16.7 6.4 L19.9 2.7 M8.3 19.0 L11.5 15.3" stroke="#2b5cd6" stroke-width="2.7" stroke-linecap="round" fill="none"/><path d="M22.6 6.6 C24.0 10 22.4 15.2 14.6 19.6" stroke="#2b5cd6" stroke-width="2.7" fill="none"/><rect x="-2.4" y="-1.55" width="4.8" height="3.1" rx="1.4" transform="translate(22.0 6.0) rotate(-51)" fill="#2b5cd6"/><rect x="-2.5" y="-1.6" width="5" height="3.2" rx="1.4" transform="translate(14.0 19.6) rotate(-47)" fill="#2b5cd6"/></svg></div>
<div class="a" style="left:894.5px;top:116.1px;width:20px;height:20px"><svg width="20" height="20" viewBox="0 0 20 20"><path d="M12.6 2.4 h6.4 a2 2 0 0 1 2 2 v3.4 a2 2 0 0 1 -2 2 h-3 l-2.2 2.2 v-2.2 h-1.2 a2 2 0 0 1 -2 -2 v-3.4 a2 2 0 0 1 2 -2z" fill="#f0f6ff" stroke="#6a9ad8" stroke-width="1.1"/><path d="M5.2 19.4 q0 -5.4 5.6 -5.4 q5.4 0 5.4 5.4z" fill="#3c8ce6"/><circle cx="5.6" cy="18" r="1.3" fill="#e8a060"/><circle cx="16" cy="18" r="1.3" fill="#e8a060"/><circle cx="10.8" cy="11.6" r="2.8" fill="#f6c898"/><path d="M7.8 11 q0.6 -4.4 4.6 -3.6 q2 0.6 1.6 3 q-1.6 -1.6 -6.2 0.6z" fill="#9a5a20"/></svg>
</div>
<div class="a row" style="top:140.9px;background:#f2f2f2">
<div class="c" style="left:0px;width:72px"></div>
<div class="c" style="left:72px;width:135px"><span class="t">Emil Č.</span></div>
<div class="c" style="left:207px;width:124px"><span class="t">Emil Číslo</span></div>
<div class="c" style="left:331px;width:151px"><span class="t">08.06.2020 12:31:17</span></div>
<div class="c" style="left:482px;width:131px"><span class="t">102</span></div>
<div class="c" style="left:613px;width:69px"><span class="t">00:00:12</span></div>
<div class="c" style="left:682px;width:106px"><span class="t">Orest M.</span></div>
<div class="c" style="left:788px;width:94px"></div>
<div class="c" style="left:882px;width:53px"></div>
<div class="c" style="left:935px;width:52px"></div>
</div>
<div class="a" style="left:0;top:140.9px;width:71px;height:25px"><svg class="a" style="left:23px;top:1px" width="26" height="24" viewBox="0 0 26 24"><path d="M14 4.6 H7.7 V1 L1.8 6.2 L7.7 11.4 V8.1 H14Z" fill="#139a13"/>
<path d="M16.7 6.4 L19.9 2.7 M8.3 19.0 L11.5 15.3" stroke="#2b5cd6" stroke-width="2.7" stroke-linecap="round" fill="none"/><path d="M22.6 6.6 C24.0 10 22.4 15.2 14.6 19.6" stroke="#2b5cd6" stroke-width="2.7" fill="none"/><rect x="-2.4" y="-1.55" width="4.8" height="3.1" rx="1.4" transform="translate(22.0 6.0) rotate(-51)" fill="#2b5cd6"/><rect x="-2.5" y="-1.6" width="5" height="3.2" rx="1.4" transform="translate(14.0 19.6) rotate(-47)" fill="#2b5cd6"/></svg></div>
<div class="a row" style="top:166.2px;background:#ffffff">
<div class="c" style="left:0px;width:72px"></div>
<div class="c" style="left:72px;width:135px"><span class="t">Orest M.</span></div>
<div class="c" style="left:207px;width:124px"><span class="t">Orest Mladý</span></div>
<div class="c" style="left:331px;width:151px"><span class="t">08.06.2020 10:32:47</span></div>
<div class="c" style="left:482px;width:131px"><span class="t">115</span></div>
<div class="c" style="left:613px;width:69px"><span class="t">00:00:00</span></div>
<div class="c" style="left:682px;width:106px"><span class="t">Emil Č.</span></div>
<div class="c" style="left:788px;width:94px"></div>
<div class="c" style="left:882px;width:53px"></div>
<div class="c" style="left:935px;width:52px"></div>
</div>
<div class="a" style="left:0;top:166.2px;width:71px;height:25px"><svg class="a" style="left:23px;top:1px" width="26" height="24" viewBox="0 0 26 24"><path d="M1.6 4.6 H8 V1 L14.2 6.2 L8 11.4 V8.1 H1.6Z" fill="#e00a0a"/>
<path d="M16.7 6.4 L19.9 2.7 M8.3 19.0 L11.5 15.3" stroke="#2b5cd6" stroke-width="2.7" stroke-linecap="round" fill="none"/><path d="M22.6 6.6 C24.0 10 22.4 15.2 14.6 19.6" stroke="#2b5cd6" stroke-width="2.7" fill="none"/><rect x="-2.4" y="-1.55" width="4.8" height="3.1" rx="1.4" transform="translate(22.0 6.0) rotate(-51)" fill="#2b5cd6"/><rect x="-2.5" y="-1.6" width="5" height="3.2" rx="1.4" transform="translate(14.0 19.6) rotate(-47)" fill="#2b5cd6"/></svg></div>
<div class="a row" style="top:191.5px;background:#f2f2f2">
<div class="c" style="left:0px;width:72px"></div>
<div class="c" style="left:72px;width:135px"><span class="t">Orest M.</span></div>
<div class="c" style="left:207px;width:124px"><span class="t">Orest Mladý</span></div>
<div class="c" style="left:331px;width:151px"><span class="t">08.06.2020 10:31:44</span></div>
<div class="c" style="left:482px;width:131px"><span class="t">115</span></div>
<div class="c" style="left:613px;width:69px"><span class="t">00:00:00</span></div>
<div class="c" style="left:682px;width:106px"><span class="t">Emil Č.</span></div>
<div class="c" style="left:788px;width:94px"></div>
<div class="c" style="left:882px;width:53px"></div>
<div class="c" style="left:935px;width:52px"></div>
</div>
<div class="a" style="left:0;top:191.5px;width:71px;height:25px"><svg class="a" style="left:23px;top:1px" width="26" height="24" viewBox="0 0 26 24"><path d="M1.6 4.6 H8 V1 L14.2 6.2 L8 11.4 V8.1 H1.6Z" fill="#139a13"/>
<path d="M16.7 6.4 L19.9 2.7 M8.3 19.0 L11.5 15.3" stroke="#2b5cd6" stroke-width="2.7" stroke-linecap="round" fill="none"/><path d="M22.6 6.6 C24.0 10 22.4 15.2 14.6 19.6" stroke="#2b5cd6" stroke-width="2.7" fill="none"/><rect x="-2.4" y="-1.55" width="4.8" height="3.1" rx="1.4" transform="translate(22.0 6.0) rotate(-51)" fill="#2b5cd6"/><rect x="-2.5" y="-1.6" width="5" height="3.2" rx="1.4" transform="translate(14.0 19.6) rotate(-47)" fill="#2b5cd6"/></svg></div>
<div class="a row" style="top:216.8px;background:#ffffff">
<div class="c" style="left:0px;width:72px"></div>
<div class="c" style="left:72px;width:135px"><span class="t">Orest M.</span></div>
<div class="c" style="left:207px;width:124px"><span class="t">Orest Mladý</span></div>
<div class="c" style="left:331px;width:151px"><span class="t">08.06.2020 10:39:48</span></div>
<div class="c" style="left:482px;width:131px"><span class="t">115</span></div>
<div class="c" style="left:613px;width:69px"><span class="t">00:00:00</span></div>
<div class="c" style="left:682px;width:106px"><span class="t">Emil Č.</span></div>
<div class="c" style="left:788px;width:94px"></div>
<div class="c" style="left:882px;width:53px"></div>
<div class="c" style="left:935px;width:52px"></div>
</div>
<div class="a" style="left:0;top:216.8px;width:71px;height:25px"><svg class="a" style="left:23px;top:1px" width="26" height="24" viewBox="0 0 26 24"><path d="M1.6 4.6 H8 V1 L14.2 6.2 L8 11.4 V8.1 H1.6Z" fill="#e00a0a"/>
<path d="M16.7 6.4 L19.9 2.7 M8.3 19.0 L11.5 15.3" stroke="#2b5cd6" stroke-width="2.7" stroke-linecap="round" fill="none"/><path d="M22.6 6.6 C24.0 10 22.4 15.2 14.6 19.6" stroke="#2b5cd6" stroke-width="2.7" fill="none"/><rect x="-2.4" y="-1.55" width="4.8" height="3.1" rx="1.4" transform="translate(22.0 6.0) rotate(-51)" fill="#2b5cd6"/><rect x="-2.5" y="-1.6" width="5" height="3.2" rx="1.4" transform="translate(14.0 19.6) rotate(-47)" fill="#2b5cd6"/></svg></div>
<div class="a row" style="top:242.1px;background:#f2f2f2">
<div class="c" style="left:0px;width:72px"></div>
<div class="c" style="left:72px;width:135px"><span class="t">Orest M.</span></div>
<div class="c" style="left:207px;width:124px"><span class="t">Orest Mladý</span></div>
<div class="c" style="left:331px;width:151px"><span class="t">08.06.2020 10:40:01</span></div>
<div class="c" style="left:482px;width:131px"><span class="t">115</span></div>
<div class="c" style="left:613px;width:69px"><span class="t">00:00:03</span></div>
<div class="c" style="left:682px;width:106px"><span class="t">Emil Č.</span></div>
<div class="c" style="left:788px;width:94px"></div>
<div class="c" style="left:882px;width:53px"></div>
<div class="c" style="left:935px;width:52px"></div>
</div>
<div class="a" style="left:0;top:242.1px;width:71px;height:25px"><svg class="a" style="left:23px;top:1px" width="26" height="24" viewBox="0 0 26 24"><path d="M1.6 4.6 H8 V1 L14.2 6.2 L8 11.4 V8.1 H1.6Z" fill="#139a13"/>
<path d="M16.7 6.4 L19.9 2.7 M8.3 19.0 L11.5 15.3" stroke="#2b5cd6" stroke-width="2.7" stroke-linecap="round" fill="none"/><path d="M22.6 6.6 C24.0 10 22.4 15.2 14.6 19.6" stroke="#2b5cd6" stroke-width="2.7" fill="none"/><rect x="-2.4" y="-1.55" width="4.8" height="3.1" rx="1.4" transform="translate(22.0 6.0) rotate(-51)" fill="#2b5cd6"/><rect x="-2.5" y="-1.6" width="5" height="3.2" rx="1.4" transform="translate(14.0 19.6) rotate(-47)" fill="#2b5cd6"/></svg></div>
<div class="a row" style="top:267.4px;background:#ffffff">
<div class="c" style="left:0px;width:72px"></div>
<div class="c" style="left:72px;width:135px"><span class="t">Orest M.</span></div>
<div class="c" style="left:207px;width:124px"><span class="t">Orest Mladý</span></div>
<div class="c" style="left:331px;width:151px"><span class="t">08.06.2020 12:29:00</span></div>
<div class="c" style="left:482px;width:131px"><span class="t">115</span></div>
<div class="c" style="left:613px;width:69px"><span class="t">00:00:00</span></div>
<div class="c" style="left:682px;width:106px"><span class="t">Emil Č.</span></div>
<div class="c" style="left:788px;width:94px"></div>
<div class="c" style="left:882px;width:53px"></div>
<div class="c" style="left:935px;width:52px"></div>
</div>
<div class="a" style="left:0;top:267.4px;width:71px;height:25px"><svg class="a" style="left:23px;top:1px" width="26" height="24" viewBox="0 0 26 24"><path d="M1.6 4.6 H8 V1 L14.2 6.2 L8 11.4 V8.1 H1.6Z" fill="#e00a0a"/>
<path d="M16.7 6.4 L19.9 2.7 M8.3 19.0 L11.5 15.3" stroke="#2b5cd6" stroke-width="2.7" stroke-linecap="round" fill="none"/><path d="M22.6 6.6 C24.0 10 22.4 15.2 14.6 19.6" stroke="#2b5cd6" stroke-width="2.7" fill="none"/><rect x="-2.4" y="-1.55" width="4.8" height="3.1" rx="1.4" transform="translate(22.0 6.0) rotate(-51)" fill="#2b5cd6"/><rect x="-2.5" y="-1.6" width="5" height="3.2" rx="1.4" transform="translate(14.0 19.6) rotate(-47)" fill="#2b5cd6"/></svg></div>
<div class="a row" style="top:292.7px;background:#f2f2f2">
<div class="c" style="left:0px;width:72px"></div>
<div class="c" style="left:72px;width:135px"><span class="t">Orest M.</span></div>
<div class="c" style="left:207px;width:124px"><span class="t">Orest Mladý</span></div>
<div class="c" style="left:331px;width:151px"><span class="t">08.06.2020 12:31:18</span></div>
<div class="c" style="left:482px;width:131px"><span class="t">115</span></div>
<div class="c" style="left:613px;width:69px"><span class="t">00:00:00</span></div>
<div class="c" style="left:682px;width:106px"><span class="t">Emil Č.</span></div>
<div class="c" style="left:788px;width:94px"></div>
<div class="c" style="left:882px;width:53px"></div>
<div class="c" style="left:935px;width:52px"></div>
</div>
<div class="a" style="left:0;top:292.7px;width:71px;height:25px"><svg class="a" style="left:23px;top:1px" width="26" height="24" viewBox="0 0 26 24"><path d="M1.6 4.6 H8 V1 L14.2 6.2 L8 11.4 V8.1 H1.6Z" fill="#139a13"/>
<path d="M16.7 6.4 L19.9 2.7 M8.3 19.0 L11.5 15.3" stroke="#2b5cd6" stroke-width="2.7" stroke-linecap="round" fill="none"/><path d="M22.6 6.6 C24.0 10 22.4 15.2 14.6 19.6" stroke="#2b5cd6" stroke-width="2.7" fill="none"/><rect x="-2.4" y="-1.55" width="4.8" height="3.1" rx="1.4" transform="translate(22.0 6.0) rotate(-51)" fill="#2b5cd6"/><rect x="-2.5" y="-1.6" width="5" height="3.2" rx="1.4" transform="translate(14.0 19.6) rotate(-47)" fill="#2b5cd6"/></svg></div>
<div id="vscroll" class="a"></div>
<svg class="a" style="left:991px;top:7px" width="12" height="8" viewBox="0 0 12 8"><path d="M1.5 6.5 L6 2 L10.5 6.5" stroke="#606060" stroke-width="1.8" fill="none"/></svg>
<svg class="a" style="left:991px;top:289px" width="12" height="8" viewBox="0 0 12 8"><path d="M1.5 1.5 L6 6 L10.5 1.5" stroke="#606060" stroke-width="1.8" fill="none"/></svg>
<div class="a" style="left:989px;top:132px;width:17px;height:97px;background:#cdcdcd"></div>
</div>
<div id="splitter" class="a"></div>
<div class="a" style="left:488px;top:491px;width:2px;height:2px;background:#4a86dc;box-shadow:1px 1px 0 #f4f8fe"></div><div class="a" style="left:493px;top:491px;width:2px;height:2px;background:#4a86dc;box-shadow:1px 1px 0 #f4f8fe"></div><div class="a" style="left:498px;top:491px;width:2px;height:2px;background:#4a86dc;box-shadow:1px 1px 0 #f4f8fe"></div><div class="a" style="left:502px;top:491px;width:2px;height:2px;background:#4a86dc;box-shadow:1px 1px 0 #f4f8fe"></div><div class="a" style="left:507px;top:491px;width:2px;height:2px;background:#4a86dc;box-shadow:1px 1px 0 #f4f8fe"></div><div class="a" style="left:512px;top:491px;width:2px;height:2px;background:#4a86dc;box-shadow:1px 1px 0 #f4f8fe"></div><div class="a" style="left:516px;top:491px;width:2px;height:2px;background:#4a86dc;box-shadow:1px 1px 0 #f4f8fe"></div><div class="a" style="left:521px;top:491px;width:2px;height:2px;background:#4a86dc;box-shadow:1px 1px 0 #f4f8fe"></div><div class="a" style="left:525px;top:491px;width:2px;height:2px;background:#4a86dc;box-shadow:1px 1px 0 #f4f8fe"></div><div class="a" style="left:530px;top:491px;width:2px;height:2px;background:#4a86dc;box-shadow:1px 1px 0 #f4f8fe"></div>
<div id="notes" class="a">
<div id="nhead" class="a">Poznámky pro hovor z 08.06.2020 12:30:57: Gaston Květný</div>
<svg class="a" style="left:987px;top:9px" width="10" height="10" viewBox="0 0 10 10"><path d="M1 4.6 L5 1 L9 4.6 M1 9 L5 5.4 L9 9" stroke="#5a6e8e" stroke-width="1.4" fill="none"/></svg>
<div class="a" style="left:0;top:28px;width:1007px;height:25px;background:linear-gradient(180deg,#fff6d8 0%,#fee8a8 50%,#feda78 100%);border-bottom:1px solid #a8b6cc"></div>
<div class="a nhc" style="left:0px;top:28px;width:74px;padding-left:11px;height:25px"><span class="t">Datum</span></div>
<div class="a nhc" style="left:74px;top:28px;width:100px;padding-left:8px;height:25px"><span class="t">Uživatel</span></div>
<div class="a nhc" style="left:174px;top:28px;width:810px;padding-left:8px;height:25px"><span class="t">Poznámka</span></div>
<div class="a nhc" style="left:984px;top:28px;width:23px;padding-left:0px;height:25px"></div>
<div class="a" style="left:0;top:53px;width:1007px;height:25px;background:#f2f2f2"></div>
<div class="a nc" style="left:0px;top:53px;width:74px;padding-left:5px"><span class="t">09.06.20...</span></div>
<div class="a nc" style="left:74px;top:53px;width:100px;padding-left:3px"><span class="t">Emil Číslo</span></div>
<div class="a nc" style="left:174px;top:53px;width:810px;padding-left:3px"><span class="t">Domluvena schůzka</span></div>
<div class="a nc" style="left:984px;top:53px;width:23px;padding-left:3px"></div>
<div class="a" style="left:0;top:78px;width:1007px;height:25px;background:#add8e6"></div>
<div class="a nc" style="left:0px;top:78px;width:74px;padding-left:5px"></div>
<div class="a nc" style="left:74px;top:78px;width:100px;padding-left:3px"><span class="t">Emil Číslo</span></div>
<div class="a nc" style="left:174px;top:78px;width:810px;padding-left:3px"><span class="t">Poznámku můžete vložit dvojkliknutím na tento text</span></div>
<div class="a nc" style="left:984px;top:78px;width:23px;padding-left:3px"></div>
<div class="a" style="left:0;top:28px;width:1px;height:75px;background:#a8b6cc"></div>
</div>
<svg class="a" style="left:994.5px;top:554.5px" width="14" height="14" viewBox="-7 -7 14 14">
<defs><radialGradient id="rm" cx=".4" cy=".3" r=".75"><stop offset="0" stop-color="#ff5050"/><stop offset=".7" stop-color="#c80808"/><stop offset="1" stop-color="#800000"/></radialGradient></defs>
<circle r="6" fill="url(#rm)"/><rect x="-3.6" y="-1.1" width="7.2" height="2.2" fill="#fff"/>
</svg>
<div id="stline" class="a"></div>
<div id="status" class="a"></div>
<div class="a sep2" style="left:777px;top:648px;height:22px"></div>
<div class="a" style="left:782px;top:648px;width:170px;height:22px;border-top:1px solid #9fc0ea;border-left:1px solid #fff;border-right:1px solid #fff;background:linear-gradient(180deg,#e8f1fd 0%,#dbe8fa 40%,#b6d3fa 43%,#b2d1f9 100%)"></div>
<svg class="a" style="left:958px;top:650px" width="20" height="20" viewBox="0 0 20 20">
<defs><linearGradient id="db" x1="0" y1="0" x2="1" y2="0"><stop offset="0" stop-color="#e8b040"/><stop offset=".5" stop-color="#fde8a0"/><stop offset="1" stop-color="#d89830"/></linearGradient></defs>
<path d="M1.5 3.5 L1.5 16 Q8 19.5 14.5 16 L14.5 3.5 Z" fill="url(#db)" stroke="#a87a28" stroke-width=".7"/>
<ellipse cx="8" cy="3.5" rx="6.5" ry="2.4" fill="#fbe6a8" stroke="#a87a28" stroke-width=".7"/>
<circle cx="14.5" cy="15" r="4.4" fill="#5aa85a" stroke="#3a7a3a" stroke-width=".6"/>
<path d="M12.4 15 L14 16.6 L16.8 13.4" stroke="#fff" stroke-width="1.3" fill="none"/>
</svg>
<div class="a sep2" style="left:980px;top:649px;height:20px"></div>
<svg class="a" style="left:985px;top:649px" width="22" height="22" viewBox="0 0 22 22">
<path d="M4 4 L16 17 M17 4 L4 17" stroke="#6a7e9e" stroke-width="2.6"/>
<circle cx="4" cy="4" r="3" fill="#dfe6f0" stroke="#607090" stroke-width=".8"/>
<circle cx="17" cy="4" r="3" fill="#dfe6f0" stroke="#607090" stroke-width=".8"/>
<circle cx="4" cy="17" r="3" fill="#dfe6f0" stroke="#607090" stroke-width=".8"/>
<circle cx="10.5" cy="10.5" r="4.5" fill="#7a8a9a" stroke="#4a5a6a" stroke-width=".8"/>
<circle cx="15.5" cy="16" r="4.4" fill="#5aa85a" stroke="#3a7a3a" stroke-width=".6"/>
<path d="M13.4 16 L15 17.6 L17.8 14.4" stroke="#fff" stroke-width="1.3" fill="none"/>
</svg>
<div class="a" style="left:1021px;top:657px;width:2px;height:2px;background:#5a86c8;box-shadow:1px 1px 0 #fff"></div><div class="a" style="left:1017px;top:661px;width:2px;height:2px;background:#5a86c8;box-shadow:1px 1px 0 #fff"></div><div class="a" style="left:1021px;top:661px;width:2px;height:2px;background:#5a86c8;box-shadow:1px 1px 0 #fff"></div><div class="a" style="left:1013px;top:665px;width:2px;height:2px;background:#5a86c8;box-shadow:1px 1px 0 #fff"></div><div class="a" style="left:1017px;top:665px;width:2px;height:2px;background:#5a86c8;box-shadow:1px 1px 0 #fff"></div><div class="a" style="left:1021px;top:665px;width:2px;height:2px;background:#5a86c8;box-shadow:1px 1px 0 #fff"></div>
</body></html>
